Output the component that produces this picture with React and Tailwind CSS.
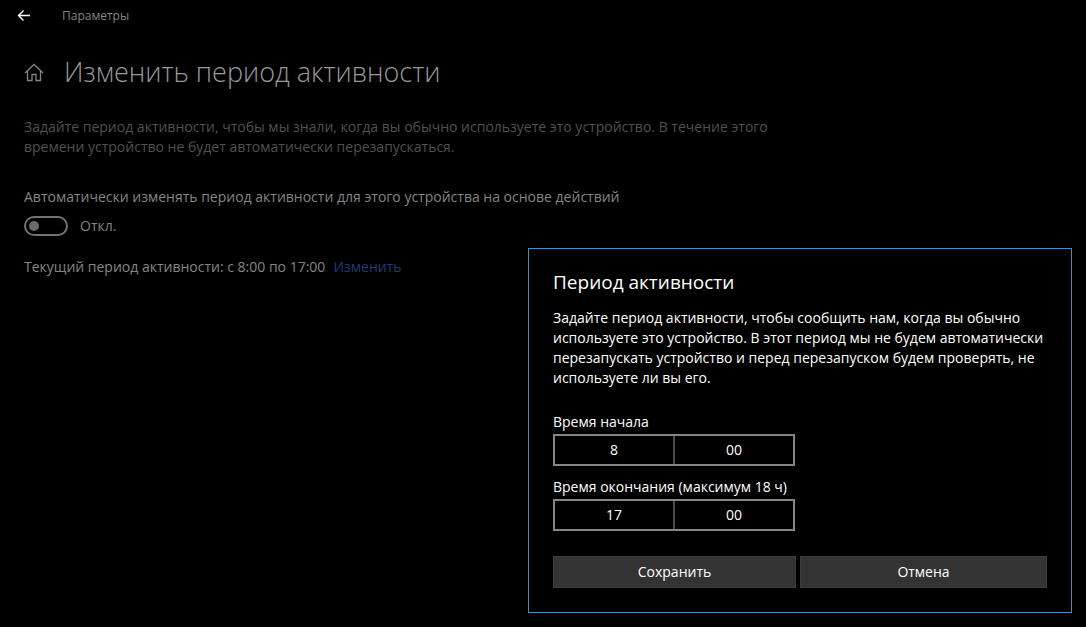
import { useState } from 'react';

const TimeField = ({ id, label, hour, minute, onHour, onMinute }) => (
  <div>
    <label htmlFor={id} className="block">{label}</label>
    <div className="mt-0.5 flex h-8 w-[242px] border-2 border-[#858585]">
      <input
        id={id}
        type="text"
        value={hour}
        onChange={(e) => onHour(e.target.value)}
        className="min-w-0 flex-1 bg-black text-center outline-none"
      />
      <span className="w-0.5 bg-[#4a4a4a]" />
      <input
        type="text"
        aria-label={`${label}, минуты`}
        value={minute}
        onChange={(e) => onMinute(e.target.value)}
        className="min-w-0 flex-1 bg-black text-center outline-none"
      />
    </div>
  </div>
);

const ActiveHoursDialog = () => {
  const [startHour, setStartHour] = useState('8');
  const [startMinute, setStartMinute] = useState('00');
  const [endHour, setEndHour] = useState('17');
  const [endMinute, setEndMinute] = useState('00');

  return (
    <form
      role="dialog"
      aria-labelledby="dialog-title"
      onSubmit={(e) => e.preventDefault()}
      className="fixed right-3.5 bottom-3.5 w-[544px] border border-[#4a8db8] bg-black px-6 pt-[19px] pb-6 text-white"
    >
      <h2 id="dialog-title" className="text-[19px] leading-7">Период активности</h2>
      <p className="mt-3 mb-6">
        Задайте период активности, чтобы сообщить нам, когда вы обычно используете это устройство. В этот период мы не будем автоматически перезапускать устройство и перед перезапуском будем проверять, не используете ли вы его.
      </p>
      <div className="flex flex-col gap-[11px]">
        <TimeField
          id="start-time"
          label="Время начала"
          hour={startHour}
          minute={startMinute}
          onHour={setStartHour}
          onMinute={setStartMinute}
        />
        <TimeField
          id="end-time"
          label="Время окончания (максимум 18 ч)"
          hour={endHour}
          minute={endMinute}
          onHour={setEndHour}
          onMinute={setEndMinute}
        />
      </div>
      <div className="mt-[25px] flex gap-1">
        <button type="submit" className="h-8 w-[243px] border border-[#3c3c3c] bg-[#333333]">Сохранить</button>
        <button type="button" className="h-8 flex-1 border border-[#3c3c3c] bg-[#333333]">Отмена</button>
      </div>
    </form>
  );
};

const App = () => {
  const [auto, setAuto] = useState(false);

  return (
    <div className="min-h-screen bg-black font-['Open_Sans','Noto_Sans',sans-serif] text-[14px] leading-5 text-[#858585]">
      <header className="flex h-8 items-center pl-[17px]">
        <button type="button" aria-label="Назад" className="text-white">
          <svg width="14" height="14" viewBox="0 0 14 14" fill="none" stroke="currentColor" strokeWidth="1.4">
            <path d="M13 6.5H1.5M6.5 1.5L1.5 6.5L6.5 11.5" />
          </svg>
        </button>
        <span className="ml-[31px] text-[12px]">Параметры</span>
      </header>

      <main className="px-6 pt-5">
        <div className="flex items-center gap-5">
          <a href="#home" aria-label="Главная">
            <svg width="20" height="20" viewBox="0 0 20 20" fill="none" stroke="currentColor" strokeWidth="1.3">
              <path d="M1 11L10 2.5L19 11M3.5 9V18.5H8V12.5H12V18.5H16.5V9" />
            </svg>
          </a>
          <h1 className="text-[27px] leading-10 font-light text-[#999999]">Изменить период активности</h1>
        </div>

        <p className="mt-[25px] max-w-[760px] text-[#505050]">
          Задайте период активности, чтобы мы знали, когда вы обычно используете это устройство. В течение этого времени устройство не будет автоматически перезапускаться.
        </p>

        <label htmlFor="auto-toggle" className="mt-[30px] block">
          Автоматически изменять период активности для этого устройства на основе действий
        </label>
        <div className="mt-[9px] flex items-center gap-3">
          <input
            id="auto-toggle"
            type="checkbox"
            role="switch"
            checked={auto}
            onChange={(e) => setAuto(e.target.checked)}
            className="flex h-5 w-11 appearance-none items-center rounded-full border-2 border-[#737373] px-[3px] before:size-2.5 before:rounded-full before:bg-[#6a6a6a] checked:justify-end"
          />
          <span>{auto ? 'Вкл.' : 'Откл.'}</span>
        </div>

        <p className="mt-[21px]">
          Текущий период активности: с 8:00 по 17:00
          <a href="#change" className="ml-2 text-[#1a3f73]">Изменить</a>
        </p>
      </main>

      <ActiveHoursDialog />
    </div>
  );
};

export default App;
